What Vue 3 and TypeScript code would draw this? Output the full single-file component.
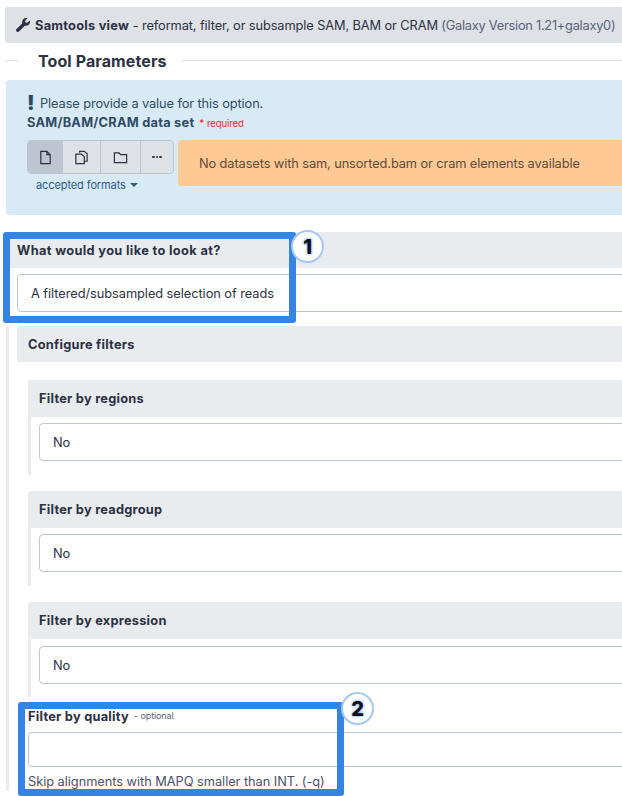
<template>
  <div class="page">
    <div class="content">
      <div class="tool-title">
        <svg class="wrench" viewBox="0 0 512 512"><path d="M507.7 109.1c-2.2-9-13.5-12.1-20.1-5.5l-74.4 74.4-67.9-11.3-11.3-67.9 74.4-74.4c6.6-6.6 3.4-17.9-5.7-20.2-47.4-11.7-99.5.9-136.6 37.9-39.7 39.7-50.5 97.1-34.1 147.2L18.700 402.800c-25 25-25 65.500 0 90.500s65.500 25 90.500 0l213.200-213.200c50.100 16.700 107.500 5.700 147.500-34.300 37.100-37.100 49.700-89.300 37.800-136.700z" /></svg>
        <span><b>Samtools view</b> - reformat, filter, or subsample SAM, BAM or CRAM <span class="version">(Galaxy Version 1.21+galaxy0)</span></span>
      </div>

      <div class="legend">
        <span class="legend-text">Tool Parameters</span>
      </div>

      <div class="alert">
        <div class="warn"><span class="bang">!</span>Please provide a value for this option.</div>
        <div class="label-row"><b>SAM/BAM/CRAM data set</b><span class="req">* <i>required</i></span></div>
        <div class="picker">
          <div class="picker-left">
            <div class="btn-group">
              <div class="btn active">
                <svg viewBox="0 0 16 16"><path d="M3 1.500h6.500L13 5v9.500H3z M9.500 1.500V5H13" /></svg>
              </div>
              <div class="btn wide">
                <svg viewBox="0 0 16 16"><path d="M6 3V1.500h5L14 4v8h-3 M2 4.500h6l3 2.500v7.500H2z" /></svg>
              </div>
              <div class="btn wider">
                <svg viewBox="0 0 16 16"><path d="M1.500 3h5l1.500 2h6.500v8.500h-13z" /></svg>
              </div>
              <div class="btn last"><span class="dots"><i></i><i></i><i></i></span></div>
            </div>
            <div class="formats">accepted formats <span class="caret"></span></div>
          </div>
          <div class="empty">No datasets with sam, unsorted.bam or cram elements available</div>
        </div>
      </div>

      <div class="param top">
        <div class="param-head"><b class="wide-label">What would you like to look at?</b></div>
        <div class="field first-field">A filtered/subsampled selection of reads</div>
      </div>

      <div class="nested">
        <div class="section-head"><b>Configure filters</b></div>
        <div class="filters">
          <div v-for="name in filters" :key="name" class="filter">
            <div class="param-head filter-head"><b>{{ name }}</b></div>
            <div class="filter-body">
              <div class="field">No</div>
            </div>
          </div>
          <div class="quality">
            <div class="quality-label"><b>Filter by quality</b><span class="optional">- optional</span></div>
            <div class="field blank"></div>
            <div class="help">Skip alignments with MAPQ smaller than INT. (-q)</div>
          </div>
        </div>
      </div>
    </div>

    <!-- annotations drawn over the screenshot -->
    <div class="mark mark-one"></div>
    <div class="badge badge-one">1</div>
    <div class="mark mark-two"></div>
    <div class="badge badge-two">2</div>
  </div>
</template>

<script setup lang="ts">
const filters: string[] = ['Filter by regions', 'Filter by readgroup', 'Filter by expression']
</script>

<style>
html,
body {
  margin: 0;
  background: #fff;
  overflow: hidden;
}
</style>

<style scoped>
.page {
  position: relative;
  width: 622px;
  height: 796px;
  overflow: hidden;
  font-family: Inter, "Liberation Sans", sans-serif;
  font-size: 12.800px;
  letter-spacing: -0.1px;
  color: #2c3143;
}

.content {
  width: 660px;
  padding: 7px 0 0 5px;
  box-sizing: border-box;
}

b {
  font-weight: 700;
  letter-spacing: 0.25px;
}

b.wide-label {
  letter-spacing: 0.35px;
}

.tool-title {
  display: flex;
  align-items: center;
  gap: 5px;
  height: 36px;
  padding-left: 11px;
  background: #dee2e6;
  border-radius: 3px;
  white-space: nowrap;
}

.wrench {
  width: 14px;
  height: 14px;
  fill: #2c3143;
}

.version {
  color: #58607a;
  letter-spacing: -0.25px;
}

.legend {
  display: flex;
  align-items: center;
  height: 37px;
  position: relative;
  top: -1px;
}

.legend::before {
  content: "";
  position: absolute;
  left: 0;
  right: 0;
  top: 18px;
  border-top: 1px solid #dee2e6;
}

.legend-text {
  position: relative;
  margin-left: 13px;
  padding: 0 15px 0 20px;
  background: #fff;
  font-size: 16px;
  font-weight: 700;
  letter-spacing: 0.1px;
}

.alert {
  height: 135px;
  margin-left: 1px;
  padding: 14px 0 0 21px;
  box-sizing: border-box;
  background: #d9eaf7;
  border-radius: 3px;
  color: #2f4a63;
}

.warn {
  display: flex;
  align-items: center;
  height: 18px;
  color: #2f4a63;
}

.bang {
  width: 13px;
  font-size: 20px;
  font-weight: 900;
  line-height: 18px;
}

.label-row {
  display: flex;
  align-items: baseline;
  margin-top: 3px;
  gap: 5px;
  white-space: nowrap;
}

.req {
  color: #f01a2c;
  font-size: 10px;
}

.req i {
  font-style: normal;
  font-size: 9.500px;
}

.picker {
  display: flex;
  gap: 4px;
  margin-top: 10px;
}

.picker-left {
  width: 147px;
}

.btn-group {
  display: flex;
  height: 34px;
  background: #dee2e6;
  border: 1px solid #bdc6d0;
  border-radius: 4px;
  box-sizing: border-box;
  overflow: hidden;
}

.btn {
  display: flex;
  align-items: center;
  justify-content: center;
  width: 34px;
  border-right: 1px solid #bdc6d0;
}

.btn.wide {
  width: 37px;
}

.btn.wider {
  width: 39px;
}

.btn.last {
  flex: 1;
  border-right: 0;
}

.btn.active {
  background: #bdc6d0;
}

.btn svg {
  width: 15px;
  height: 15px;
  fill: none;
  stroke: #2c3143;
  stroke-width: 1.300;
}

.dots {
  display: flex;
  gap: 1px;
}

.dots i {
  width: 2.500px;
  height: 2.500px;
  border-radius: 50%;
  background: #2c3143;
}

.formats {
  margin: 4px 0 0 9px;
  font-size: 11px;
  line-height: 15px;
  color: #2c5a85;
}

.caret {
  display: inline-block;
  margin-left: 1px;
  vertical-align: 2px;
  border: 4px solid transparent;
  border-top-color: #2c5a85;
  border-bottom: 0;
}

.empty {
  flex: 1;
  display: flex;
  align-items: center;
  height: 46px;
  padding-left: 21px;
  background: #fec995;
  border-radius: 4px;
  color: #5e4a3c;
  white-space: nowrap;
}

.param.top {
  margin-top: 17px;
  margin-left: 1px;
}

.param-head {
  display: flex;
  align-items: center;
  height: 36px;
  padding: 0 0 0 11px;
  background: #e9ecef;
  border-radius: 3px 3px 0 0;
}

.field {
  display: flex;
  align-items: center;
  height: 38px;
  padding-left: 13px;
  box-sizing: border-box;
  background: #fff;
  border: 1px solid #bdc6d0;
  border-radius: 4px;
}

.first-field {
  margin: 6px 0 0 11px;
  letter-spacing: -0.05px;
}

.nested {
  margin: 14px 0 0 1px;
  padding-left: 8px;
  border-left: 3px solid #e9ecef;
}

.section-head {
  display: flex;
  align-items: center;
  height: 36px;
  padding-left: 11px;
  background: #e9ecef;
  border-radius: 3px 3px 0 0;
}

.filters {
  padding: 18px 0 0 11px;
}

.filter {
  margin-bottom: 16px;
}

.filter-head {
  height: 37px;
}

.filter-body {
  padding: 6px 0 14px 8px;
  border-left: 3px solid #e9ecef;
}

.filter:nth-child(3) .filter-body {
  padding: 7px 0 13px 8px;
}

.quality {
  margin-top: -5px;
}

.quality-label {
  display: flex;
  align-items: baseline;
  gap: 5px;
  line-height: 18px;
}

.optional {
  position: relative;
  top: -2px;
  font-size: 9px;
  color: #58607a;
}

.blank {
  height: 35px;
  margin-top: 5px;
}

.help {
  margin-top: 6px;
  line-height: 18px;
  letter-spacing: -0.04px;
  color: #4a5168;
  white-space: nowrap;
}

.mark {
  position: absolute;
  box-sizing: border-box;
  border: 7px solid #3584e4;
  border-radius: 3px;
}

.mark-one {
  left: 3px;
  top: 232px;
  width: 293px;
  height: 91px;
}

.mark-two {
  left: 18px;
  top: 702px;
  width: 326px;
  height: 94px;
}

.badge {
  position: absolute;
  width: 33px;
  height: 33px;
  box-sizing: border-box;
  display: flex;
  align-items: center;
  justify-content: center;
  background: #fff;
  border: 2px solid #a5c8f0;
  border-radius: 50%;
  font-size: 20px;
  font-weight: 800;
  color: #111;
  text-shadow: 0 0 3px #3584e4;
}

.badge-one {
  left: 291px;
  top: 230px;
}

.badge-two {
  left: 341px;
  top: 692px;
}
</style>
